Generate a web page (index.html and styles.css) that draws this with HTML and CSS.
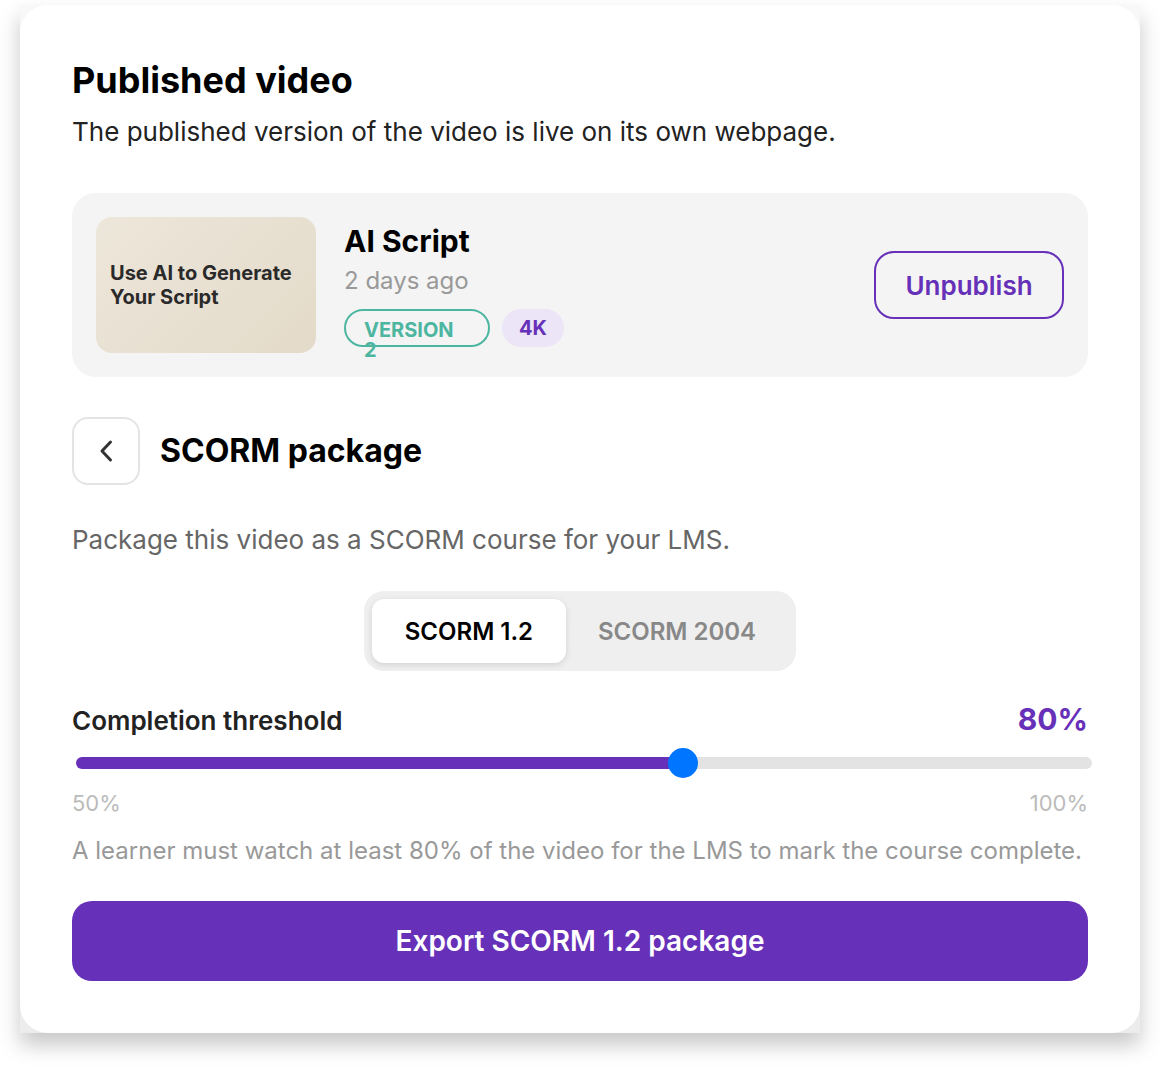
FILE: index.html
```html
<!DOCTYPE html>
<html lang="en">
<head>
    <meta charset="UTF-8">
    <meta name="viewport" content="width=device-width, initial-scale=1.0">
    <title>Published video</title>
    <link rel="stylesheet" href="styles.css">
</head>
<body>
    <div class="frame">
        <main class="panel">
            <header class="panel-header">
                <h1>Published video</h1>
                <p>The published version of the video is live on its own webpage.</p>
            </header>

            <section class="video-card">
                <div class="thumbnail">Use AI to Generate Your Script</div>
                <div class="video-info">
                    <h2>AI Script</h2>
                    <p class="video-date">2 days ago</p>
                    <div class="badges">
                        <span class="badge badge-version">VERSION 2</span>
                        <span class="badge badge-quality">4K</span>
                    </div>
                </div>
                <button type="button" class="btn-outline">Unpublish</button>
            </section>

            <div class="section-title">
                <button type="button" class="btn-back" aria-label="Back">
                    <svg width="16" height="24" viewBox="0 0 16 24" fill="none" stroke="#333" stroke-width="3" stroke-linecap="round" stroke-linejoin="round">
                        <path d="M12.5 3L4 12L12.5 21"/>
                    </svg>
                </button>
                <h2>SCORM package</h2>
            </div>

            <p class="description">Package this video as a SCORM course for your LMS.</p>

            <div class="tabs">
                <button type="button" class="tab active" data-version="1.2">SCORM 1.2</button>
                <button type="button" class="tab" data-version="2004">SCORM 2004</button>
            </div>

            <div class="threshold-header">
                <label for="threshold">Completion threshold</label>
                <output for="threshold" id="thresholdValue">80%</output>
            </div>
            <input type="range" class="slider" id="threshold" min="50" max="100" value="80">
            <div class="slider-scale">
                <span>50%</span>
                <span>100%</span>
            </div>
            <p class="help">A learner must watch at least <span id="helpValue">80%</span> of the video for the LMS to mark the course complete.</p>

            <button type="button" class="btn-export">Export SCORM <span id="exportVersion">1.2</span> package</button>
        </main>
    </div>

    <script>
        const slider = document.getElementById('threshold');
        const tabs = document.querySelectorAll('.tab');

        function updateThreshold() {
            const value = slider.value + '%';
            document.getElementById('thresholdValue').textContent = value;
            document.getElementById('helpValue').textContent = value;
            slider.style.setProperty('--fill', (slider.value - 50) * 2 + '%');
        }

        tabs.forEach(tab => {
            tab.addEventListener('click', () => {
                tabs.forEach(t => t.classList.remove('active'));
                tab.classList.add('active');
                document.getElementById('exportVersion').textContent = tab.dataset.version;
            });
        });

        slider.addEventListener('input', updateThreshold);
        updateThreshold();
    </script>
</body>
</html>
```
FILE: styles.css
```css
* {
    box-sizing: border-box;
}
body {
    margin: 0;
    padding: 5px 20px 35px;
    background: #fff;
    color: #000;
    font-family: Inter, "Liberation Sans", sans-serif;
    font-size: 26px;
    line-height: 32px;
}
h1, h2, p {
    margin: 0;
}
button {
    font-family: inherit;
    cursor: pointer;
}
.frame {
    background: linear-gradient(#f8f8f8, #ececec);
    box-shadow: 0 12px 20px rgba(0, 0, 0, 0.22);
}
.panel {
    display: flex;
    flex-direction: column;
    padding: 52px;
    background: #fff;
    border-radius: 28px;
}
h1 {
    font-size: 36px;
    line-height: 46px;
    font-weight: 700;
}
.panel-header p {
    margin-top: 13px;
    color: #222;
}
.video-card {
    display: flex;
    align-items: center;
    gap: 28px;
    margin-top: 45px;
    padding: 24px;
    background: #f4f4f4;
    border-radius: 24px;
}
.thumbnail {
    display: flex;
    align-items: center;
    flex: none;
    width: 220px;
    height: 136px;
    padding: 0 14px;
    background: linear-gradient(135deg, #ede6da, #e3dac9);
    border-radius: 16px;
    color: #2a2a2a;
    font-size: 20px;
    line-height: 24px;
    font-weight: 700;
}
.video-info {
    flex: 1;
    padding-bottom: 2px;
}
.video-info h2 {
    font-size: 30px;
    line-height: 40px;
    font-weight: 700;
}
.video-date {
    margin: 4px 0 12px;
    color: #999;
    font-size: 24px;
}
.badges {
    display: flex;
    gap: 12px;
}
.badge {
    height: 38px;
    border-radius: 19px;
    font-size: 20px;
    font-weight: 700;
}
.badge-version {
    width: 146px;
    padding: 9px 24px 0 18px;
    border: 2px solid #4db6a0;
    color: #4db6a0;
    line-height: 20px;
}
.badge-quality {
    padding: 0 17px;
    background: #ebe5f7;
    color: #6631b8;
    line-height: 38px;
}
.btn-outline {
    width: 190px;
    height: 68px;
    padding: 0;
    background: none;
    border: 2px solid #6631b8;
    border-radius: 20px;
    color: #6631b8;
    font-size: 26px;
    font-weight: 600;
}
.section-title {
    display: flex;
    align-items: center;
    gap: 20px;
    margin-top: 40px;
}
.section-title h2 {
    font-size: 32px;
    line-height: 40px;
    font-weight: 700;
}
.btn-back {
    display: flex;
    align-items: center;
    justify-content: center;
    width: 68px;
    height: 68px;
    padding: 0;
    background: #fff;
    border: 2px solid #e4e4e4;
    border-radius: 16px;
}
.description {
    margin-top: 39px;
    color: #666;
}
.tabs {
    display: flex;
    align-self: center;
    margin-top: 35px;
    padding: 8px;
    background: #efefef;
    border-radius: 20px;
}
.tab {
    min-width: 194px;
    height: 64px;
    padding: 0 32px;
    background: none;
    border: none;
    border-radius: 12px;
    color: #888;
    font-size: 24px;
    font-weight: 600;
}
.tab.active {
    background: #fff;
    box-shadow: 0 2px 6px rgba(0, 0, 0, 0.12);
    color: #000;
}
.threshold-header {
    display: flex;
    align-items: baseline;
    justify-content: space-between;
    margin-top: 28px;
}
.threshold-header label {
    color: #222;
    font-weight: 600;
}
.threshold-header output {
    color: #6631b8;
    font-size: 30px;
    line-height: 40px;
    font-weight: 700;
}
.slider {
    appearance: none;
    width: 100%;
    height: 12px;
    margin: 18px 4px;
    background: linear-gradient(to right, #6631b8 var(--fill, 60%), #e3e3e3 var(--fill, 60%));
    border-radius: 6px;
}
.slider::-webkit-slider-thumb {
    appearance: none;
    width: 30px;
    height: 30px;
    background: #0075ff;
    border-radius: 50%;
}
.slider::-moz-range-thumb {
    width: 30px;
    height: 30px;
    background: #0075ff;
    border: none;
    border-radius: 50%;
}
.slider-scale {
    display: flex;
    justify-content: space-between;
    color: #bbb;
    font-size: 22px;
}
.help {
    margin-top: 16px;
    color: #999;
    font-size: 24px;
}
.btn-export {
    height: 80px;
    margin-top: 34px;
    background: #6631b8;
    border: none;
    border-radius: 20px;
    color: #fff;
    font-size: 28px;
    font-weight: 600;
}
```
